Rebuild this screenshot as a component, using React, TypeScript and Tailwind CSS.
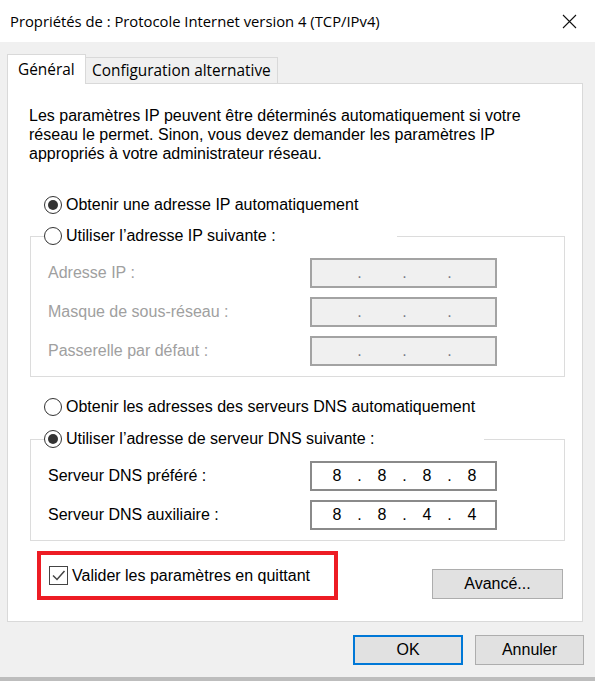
import React from "react";

const BODY = "font-['Liberation_Sans',Arial,sans-serif]";
const UI = "font-['Open_Sans','Noto_Sans',sans-serif]";

function Radio({ checked }: { checked?: boolean }) {
  return (
    <span className="w-[18px] h-[18px] rounded-full border border-[#333] bg-white flex items-center justify-center shrink-0">
      {checked && <span className="w-[10px] h-[10px] rounded-full bg-[#333]" />}
    </span>
  );
}

function IPBox({ values, disabled }: { values?: string[]; disabled?: boolean }) {
  const v = values ?? ["", "", "", ""];
  const box = disabled
    ? "border-2 border-[#a3a3a3] bg-[#f0f0f0] text-[#7a7a8a]"
    : "border-2 border-[#8a8a8a] bg-white text-black";
  return (
    <div className={`w-[187px] h-[30px] flex items-center pl-[7px] ${box}`}>
      {v.map((d, i) => (
        <React.Fragment key={i}>
          <span className="w-[36px] text-center">{d}</span>
          {i < 3 && <span className="w-[9px] text-center">.</span>}
        </React.Fragment>
      ))}
    </div>
  );
}

function Field({ label, values, disabled }: { label: string; values?: string[]; disabled?: boolean }) {
  return (
    <div className="flex items-center pl-[17px]">
      <span className={`w-[262px] ${disabled ? "text-[#a0a0a0]" : "text-black"}`}>{label}</span>
      <IPBox values={values} disabled={disabled} />
    </div>
  );
}

function Button({ children, className }: { children: React.ReactNode; className: string }) {
  return (
    <div className={`h-[30px] bg-[#e1e1e1] flex items-center justify-center text-black ${className}`}>
      {children}
    </div>
  );
}

export default function App() {
  return (
    <div className={`w-[595px] h-[681px] flex flex-col bg-[#f0f0f0] text-[16px] ${BODY}`}>
      <div className="h-[677px] flex flex-col">
        {/* Title bar */}
        <div className="h-[42px] bg-white flex items-center justify-between pl-[10px] pr-[18px]">
          <span className={`text-[14.8px] text-black ${UI}`}>Propriétés de : Protocole Internet version 4 (TCP/IPv4)</span>
          <svg width="15" height="15" viewBox="0 0 15 15">
            <path d="M1 1 L14 14 M14 1 L1 14" stroke="#111" strokeWidth="1.1" />
          </svg>
        </div>

        {/* Tabs */}
        <div className={`mt-[12px] ml-[7px] flex items-end h-[29px] ${UI} text-[15.4px]`}>
          <div className="relative z-10 -mb-px w-[79px] h-[30px] bg-white border-l border-t border-r border-[#d9d9d9] pl-[10px] flex items-center">
            Général
          </div>
          <div className="w-[192px] h-[26px] bg-[#f0f0f0] border-t border-r border-[#d9d9d9] pl-[6px] flex items-center">
            Configuration alternative
          </div>
        </div>

        {/* Panel */}
        <div className="ml-[7px] w-[576px] h-[539px] bg-white border border-[#d9d9d9] flex flex-col">
          <p className="pt-[22px] pl-[21px] leading-[19px] text-black whitespace-nowrap">
            Les paramètres IP peuvent être déterminés automatiquement si votre
            <br />
            réseau le permet. Sinon, vous devez demander les paramètres IP
            <br />
            appropriés à votre administrateur réseau.
          </p>

          <div className="mt-[32px] ml-[36px] h-[20px] flex items-center gap-[4px]">
            <Radio checked />
            <span>Obtenir une adresse IP automatiquement</span>
          </div>

          <fieldset className="mt-[11px] ml-[22px] w-[535px] border border-[#dcdcdc] pb-[10px]">
            <legend className="ml-[13px] w-[353px] h-[20px] flex items-center gap-[4px]">
              <Radio />
              <span>Utiliser l’adresse IP suivante :</span>
            </legend>
            <div className="mt-[12px] flex flex-col gap-[9px]">
              <Field label="Adresse IP :" disabled />
              <Field label="Masque de sous-réseau :" disabled />
              <Field label="Passerelle par défaut :" disabled />
            </div>
          </fieldset>

          <div className="mt-[20px] ml-[36px] h-[20px] flex items-center gap-[4px]">
            <Radio />
            <span>Obtenir les adresses des serveurs DNS automatiquement</span>
          </div>

          <fieldset className="mt-[12px] ml-[22px] w-[535px] border border-[#dcdcdc] pb-[10px]">
            <legend className="ml-[13px] w-[440px] h-[20px] flex items-center gap-[4px]">
              <Radio checked />
              <span>Utiliser l’adresse de serveur DNS suivante :</span>
            </legend>
            <div className="mt-[12px] flex flex-col gap-[9px]">
              <Field label="Serveur DNS préféré :" values={["8", "8", "8", "8"]} />
              <Field label="Serveur DNS auxiliaire :" values={["8", "8", "4", "4"]} />
            </div>
          </fieldset>

          <div className="flex items-start">
            <div className="mt-[10px] ml-[29px] w-[301px] h-[49px] border-4 border-[#ed1c24] flex items-center pl-[8px] gap-[4px]">
              <span className="w-[19px] h-[19px] border-[1.5px] border-[#444] bg-white flex items-center justify-center shrink-0">
                <svg width="15" height="15" viewBox="0 0 15 15">
                  <path d="M2 7.5 L6 11.5 L13.5 3" stroke="#444" strokeWidth="1.5" fill="none" />
                </svg>
              </span>
              <span>Valider les paramètres en quittant</span>
            </div>
            <Button className="ml-auto mr-[19px] mt-[28px] w-[131px] border border-[#adadad]">Avancé...</Button>
          </div>
        </div>

        {/* Bottom buttons */}
        <div className="mt-[13px] flex justify-end gap-[12px] pr-[11px]">
          <Button className="w-[110px] border-2 border-[#0078d7]">OK</Button>
          <Button className="w-[109px] border border-[#adadad]">Annuler</Button>
        </div>
      </div>
      <div className="h-[4px] bg-[#bdbdbd]" />
    </div>
  );
}
